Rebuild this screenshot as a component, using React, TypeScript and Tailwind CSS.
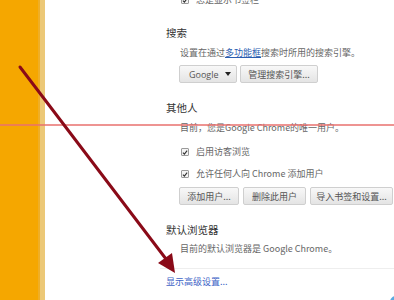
import React from "react";

const font = { fontFamily: '"Noto Sans CJK SC", "Open Sans", sans-serif' };

function Btn({ w, children }: { w: number; children: React.ReactNode }) {
  return (
    <div
      className="h-[18px] flex items-center justify-center rounded-[2px] border border-[#cfcfcf] bg-gradient-to-b from-[#f8f8f8] to-[#e4e4e4] text-[9px] text-[#555] leading-none whitespace-nowrap"
      style={{ width: w }}
    >
      {children}
    </div>
  );
}

function Check({ label }: { label: string }) {
  return (
    <div className="h-[12px] flex items-center">
      <div className="ml-[1px] w-[8px] h-[8px] border border-[#9a9a9a] bg-[#f4f4f4] rounded-[1px] flex items-center justify-center">
        <svg width="7" height="7" viewBox="0 0 8 8">
          <path d="M1.2 4.2 L3.2 6.2 L6.8 1.4" fill="none" stroke="#333" strokeWidth="1.5" />
        </svg>
      </div>
      <span className="ml-[7px] text-[9px] text-[#666] leading-[12px] whitespace-nowrap">{label}</span>
    </div>
  );
}

export default function App() {
  return (
    <div className="relative w-[394px] h-[300px] overflow-hidden bg-white flex" style={font}>
      <div className="w-[38px] h-full bg-[#f5a700] shrink-0" />
      <div className="w-[2px] h-full bg-[#efae25] shrink-0" />
      <div className="w-[5px] h-full bg-[#ecc877] shrink-0" />
      <div className="flex-1 flex flex-col pl-[121px] mt-[-6px]">
        <div className="pl-[14px]">
          <Check label="总是显示书签栏" />
        </div>
        <div className="mt-[20px] h-[14px] text-[10.5px] leading-[14px] text-[#333]">搜索</div>
        <div className="mt-[7px] pl-[14px] h-[12px] text-[9px] leading-[12px] text-[#666] whitespace-nowrap">
          设置在通过<span className="text-[#2a5db0] underline">多功能框</span>搜索时所用的搜索引擎。
        </div>
        <div className="mt-[6px] pl-[13px] flex gap-[3px]">
          <Btn w={58}>
            <span className="flex items-center w-full pl-[9px] pr-[5px] justify-between">
              <span style={{ fontFamily: '"Open Sans", sans-serif' }}>Google</span>
              <svg width="6" height="4" viewBox="0 0 6 4">
                <path d="M0 0 L6 0 L3 4 Z" fill="#222" />
              </svg>
            </span>
          </Btn>
          <Btn w={78}>管理搜索引擎...</Btn>
        </div>
        <div className="mt-[18px] h-[14px] text-[10.5px] leading-[14px] text-[#333]">其他人</div>
        <div className="mt-[7px] pl-[14px] h-[12px] text-[9px] leading-[12px] text-[#666] whitespace-nowrap">
          目前，您是Google Chrome的唯一用户。
        </div>
        <div className="mt-[12px] pl-[14px]">
          <Check label="启用访客浏览" />
        </div>
        <div className="mt-[10px] pl-[14px]">
          <Check label="允许任何人向 Chrome 添加用户" />
        </div>
        <div className="mt-[7px] pl-[13px] flex gap-[4px]">
          <Btn w={60}>添加用户...</Btn>
          <Btn w={63}>删除此用户</Btn>
          <Btn w={83}>导入书签和设置...</Btn>
        </div>
        <div className="mt-[18px] h-[14px] text-[10.5px] leading-[14px] text-[#333]">默认浏览器</div>
        <div className="mt-[6px] pl-[14px] h-[12px] text-[9px] leading-[12px] text-[#666] whitespace-nowrap">
          目前的默认浏览器是 Google Chrome。
        </div>
        <div className="mt-[13px] ml-[-6px] h-[1px] bg-[#eeeeee]" />
        <div className="mt-[7px] h-[12px] text-[9px] leading-[12px] text-[#3d63c6] whitespace-nowrap">
          显示高级设置...
        </div>
      </div>

      <svg className="absolute left-0 top-0 pointer-events-none" width="394" height="300" viewBox="0 0 394 300">
        <line x1="0" y1="125" x2="394" y2="125" stroke="#e9706e" strokeWidth="1.6" />
        <line x1="20" y1="67" x2="166" y2="259" stroke="#8a0a18" strokeWidth="3" strokeLinecap="round" />
        <path d="M175 273 L158 263 L172 253 Z" fill="#8a0a18" />
        <circle cx="396" cy="302" r="6" fill="#5aa9e0" />
      </svg>
    </div>
  );
}
